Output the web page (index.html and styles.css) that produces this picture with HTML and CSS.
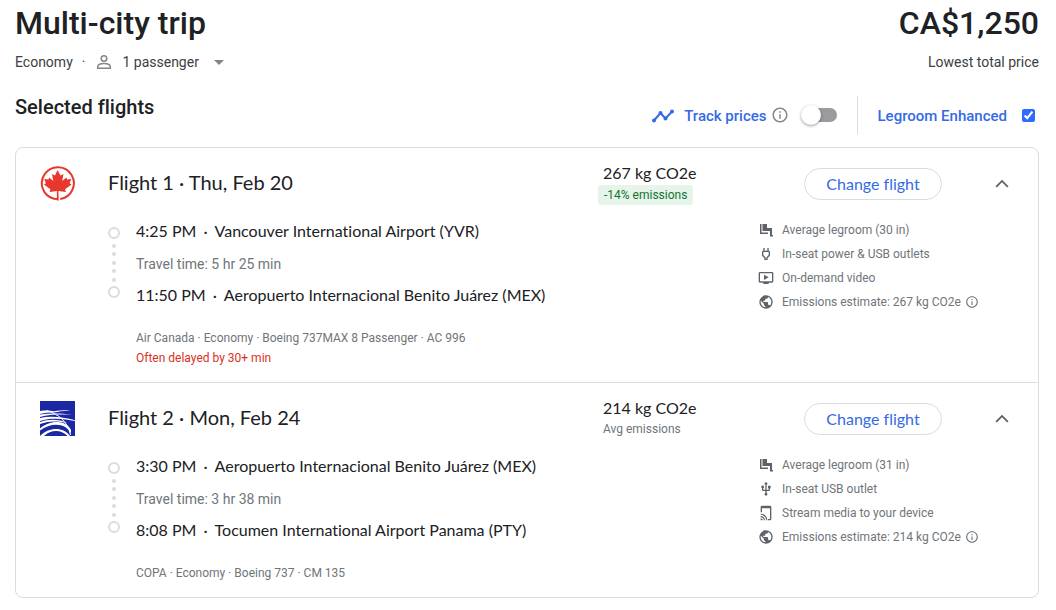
FILE: index.html
```html
<!DOCTYPE html>
<html lang="en">
<head>
<meta charset="utf-8">
<meta name="viewport" content="width=device-width, initial-scale=1">
<title>Multi-city trip</title>
<link rel="stylesheet" href="styles.css">
</head>
<body>
<svg class="sprite" aria-hidden="true">
  <symbol id="info" viewBox="0 0 24 24"><path d="M11 7h2v2h-2zm0 4h2v6h-2zm1-9C6.480 2 2 6.480 2 12s4.480 10 10 10 10-4.480 10-10S17.520 2 12 2zm0 18c-4.410 0-8-3.590-8-8s3.590-8 8-8 8 3.590 8 8-3.590 8-8 8z"/></symbol>
  <symbol id="chevron" viewBox="0 0 24 24"><path d="M12 8l-6 6 1.200 1.200L12 10.400l4.800 4.800L18 14z"/></symbol>
  <symbol id="seat" viewBox="0 0 16 16"><path d="M2 2h1.500v8.500H10V12H2zM4.500 2H9v4h5v7h1v1.500h-3V9H4.500z"/></symbol>
  <symbol id="power" viewBox="0 0 24 24"><path d="M16 9v4.660l-3.500 3.510V19h-1v-1.830L8 13.650V9h8m0-6h-2v4h-4V3H8v4h-.010C6.900 6.990 6 7.890 6 8.980v5.520L9.500 18v3h5v-3l3.500-3.510V9c0-1.100-.900-2-2-2V3z"/></symbol>
  <symbol id="video" viewBox="0 0 24 24"><path d="M9 7v8l7-4zm12-4H3c-1.110 0-2 .890-2 2v12c0 1.100.890 2 2 2h5v2h8v-2h5c1.100 0 1.990-.900 1.990-2L23 5c0-1.110-.900-2-2-2zm0 14H3V5h18v12z"/></symbol>
  <symbol id="globe" viewBox="0 0 24 24"><path d="M12 2C6.480 2 2 6.480 2 12s4.480 10 10 10 10-4.480 10-10S17.520 2 12 2zm-1 17.930c-3.950-.490-7-3.850-7-7.930 0-.620.080-1.210.210-1.790L9 15v1c0 1.100.900 2 2 2v1.930zm6.900-2.540c-.260-.810-1-1.390-1.900-1.390h-1v-3c0-.550-.450-1-1-1H8v-2h2c.550 0 1-.450 1-1V7h2c1.100 0 2-.900 2-2v-.410c2.930 1.190 5 4.060 5 7.410 0 2.080-.800 3.970-2.100 5.390z"/></symbol>
  <symbol id="usb" viewBox="0 0 24 24"><path d="M15 7v4h1v2h-3V5h2l-3-4-3 4h2v8H8v-2.070c.700-.370 1.200-1.080 1.200-1.930 0-1.210-.990-2.200-2.200-2.200S4.800 7.790 4.800 9c0 .850.500 1.560 1.200 1.930V13c0 1.110.890 2 2 2h3v3.050c-.710.370-1.200 1.100-1.200 1.950 0 1.220.990 2.200 2.200 2.200s2.200-.980 2.200-2.200c0-.850-.490-1.580-1.200-1.950V15h3c1.110 0 2-.890 2-2v-2h1V7z"/></symbol>
  <symbol id="stream" viewBox="0 0 24 24"><path d="M18 1H6c-1.100 0-2 .900-2 2v8h2V5h12v16h-3v2h3c1.100 0 2-.900 2-2V3c0-1.100-.900-2-2-2zM4 20v3h3c0-1.660-1.340-3-3-3zm0-3.500v1.700c2.650 0 4.800 2.150 4.800 4.800h1.700c0-3.590-2.910-6.500-6.500-6.500zM4 13v1.700c4.580 0 8.300 3.720 8.300 8.300H14c0-5.520-4.480-10-10-10z"/></symbol>
</svg>
<main class="page">
  <header class="summary">
    <div>
      <h1 class="display">Multi-city trip</h1>
      <div class="trip-info">
        <span>Economy</span><span class="sep">·</span>
        <button class="passengers" type="button">
          <svg class="icon-person" viewBox="0 0 16 16" aria-hidden="true"><circle cx="8" cy="4.500" r="2.800"/><path d="M1.700 14.300v-1.600c0-2 3.200-3.300 6.300-3.300s6.300 1.300 6.300 3.300v1.600z"/></svg>
          <span>1 passenger</span>
          <svg class="icon-caret" viewBox="0 0 10 5" aria-hidden="true"><path d="M0 0h10L5 5z"/></svg>
        </button>
      </div>
    </div>
    <div class="total">
      <p class="display">CA$1,250</p>
      <p class="total-note">Lowest total price</p>
    </div>
  </header>

  <div class="toolbar">
    <h2 class="subtitle">Selected flights</h2>
    <div class="track">
      <svg class="icon-trend" viewBox="0 0 24 16" aria-hidden="true"><path d="M3 13.500L9.500 6l5 5.500L21 4.500"/><circle cx="3" cy="13.500" r="2"/><circle cx="9.500" cy="6" r="2"/><circle cx="14.500" cy="11.500" r="2"/><circle cx="21" cy="4.500" r="2"/></svg>
      <label class="tool-label" for="track">Track prices</label>
      <svg class="icon-info-lg" aria-hidden="true"><use href="#info"/></svg>
      <input class="switch" id="track" type="checkbox" role="switch">
    </div>
    <div class="legroom">
      <label class="tool-label" for="legroom">Legroom Enhanced</label>
      <input class="check" id="legroom" type="checkbox" checked>
    </div>
  </div>

  <div class="card">
    <section class="flight">
      <div class="flight-head">
        <svg class="logo" viewBox="0 0 35 35" preserveAspectRatio="xMidYMin" role="img" aria-label="Air Canada">
          <path class="ac-ring" d="M20.200 33A16 16 0 1 0 14 32.700L17 33"/>
          <path class="ac-leaf" d="M17.500 4l3 5.400 3-1.500-1.300 7.200 4.100-3.700.800 2.200 4.200-.700-1.700 4.400 1.900 1.200-6.400 4.700.800 2.900-7.500-1.200.300 9.500h-1.900l.100-9.500-7.300 1.200.8-2.900-6.400-4.700 1.900-1.200-1.700-4.400 4.200.700.8-2.200 4.100 3.700-1.300-7.200 3 1.500z"/>
        </svg>
        <h3 class="flight-title">Flight 1 · Thu, Feb 20</h3>
        <div class="emissions"><span class="amount">267 kg CO2e</span><span class="badge">-14% emissions</span></div>
        <button class="change" type="button">Change flight</button>
        <button class="toggle" type="button" aria-label="Collapse flight 1"><svg class="icon-chevron" aria-hidden="true"><use href="#chevron"/></svg></button>
      </div>
      <div class="flight-body">
        <div class="timeline" aria-hidden="true"><i class="ring"></i><span class="dots"><i class="dot"></i><i class="dot"></i><i class="dot"></i><i class="dot"></i><i class="dot"></i></span><i class="ring"></i></div>
        <div class="route">
          <p class="stop"><span>4:25 PM</span><span>·</span><span>Vancouver International Airport (YVR)</span></p>
          <p class="duration">Travel time: 5 hr 25 min</p>
          <p class="stop"><span>11:50 PM</span><span>·</span><span>Aeropuerto Internacional Benito Juárez (MEX)</span></p>
          <p class="meta">Air Canada · Economy · Boeing 737MAX 8 Passenger · AC 996</p>
          <p class="delay">Often delayed by 30+ min</p>
        </div>
        <ul class="amenities">
          <li class="amenity"><svg class="icon" aria-hidden="true"><use href="#seat"/></svg>Average legroom (30 in)</li>
          <li class="amenity"><svg class="icon" aria-hidden="true"><use href="#power"/></svg>In-seat power &amp; USB outlets</li>
          <li class="amenity"><svg class="icon" aria-hidden="true"><use href="#video"/></svg>On-demand video</li>
          <li class="amenity"><svg class="icon" aria-hidden="true"><use href="#globe"/></svg>Emissions estimate: 267 kg CO2e<svg class="icon-info" aria-hidden="true"><use href="#info"/></svg></li>
        </ul>
      </div>
    </section>

    <section class="flight">
      <div class="flight-head">
        <svg class="logo" viewBox="0 0 35 35" preserveAspectRatio="xMidYMin" role="img" aria-label="Copa Airlines">
          <path class="copa-bg" d="M0 0h35v35H0z"/>
          <g class="copa-lines">
            <path d="M0 10c6-.8 9-.6 14 .2 6-.8 11-1 16-.8-7 .5-12 1-16 2.200-5 0-9 .4-14 1.400z"/>
            <path d="M0 13.500c11-1.500 22-1.200 32 .4-10-.4-22-.8-32 2z"/>
            <path d="M0 17c11-2.500 24-.6 35 2.300v.8C24 17.800 11 16.400 0 20z"/>
            <path d="M0 21c10-3.500 20-2.500 27 1-8-2-18-2.500-27 1z"/>
            <path d="M0 27.500c9-8.500 26-9.500 31 1.500v4C27 22.500 12 20.500 0 29.500z"/>
            <path d="M1 34c8-8 23-8.500 29 1h-2.500C21 28.300 11 28.500 4 35H0z"/>
          </g>
          <path class="copa-arc" d="M6 9.500C19 13 28 21 30.500 34"/>
        </svg>
        <h3 class="flight-title">Flight 2 · Mon, Feb 24</h3>
        <div class="emissions"><span class="amount">214 kg CO2e</span><span class="average">Avg emissions</span></div>
        <button class="change" type="button">Change flight</button>
        <button class="toggle" type="button" aria-label="Collapse flight 2"><svg class="icon-chevron" aria-hidden="true"><use href="#chevron"/></svg></button>
      </div>
      <div class="flight-body">
        <div class="timeline" aria-hidden="true"><i class="ring"></i><span class="dots"><i class="dot"></i><i class="dot"></i><i class="dot"></i><i class="dot"></i><i class="dot"></i></span><i class="ring"></i></div>
        <div class="route">
          <p class="stop"><span>3:30 PM</span><span>·</span><span>Aeropuerto Internacional Benito Juárez (MEX)</span></p>
          <p class="duration">Travel time: 3 hr 38 min</p>
          <p class="stop"><span>8:08 PM</span><span>·</span><span>Tocumen International Airport Panama (PTY)</span></p>
          <p class="meta">COPA · Economy · Boeing 737 · CM 135</p>
        </div>
        <ul class="amenities">
          <li class="amenity"><svg class="icon" aria-hidden="true"><use href="#seat"/></svg>Average legroom (31 in)</li>
          <li class="amenity"><svg class="icon" aria-hidden="true"><use href="#usb"/></svg>In-seat USB outlet</li>
          <li class="amenity"><svg class="icon" aria-hidden="true"><use href="#stream"/></svg>Stream media to your device</li>
          <li class="amenity"><svg class="icon" aria-hidden="true"><use href="#globe"/></svg>Emissions estimate: 214 kg CO2e<svg class="icon-info" aria-hidden="true"><use href="#info"/></svg></li>
        </ul>
      </div>
    </section>
  </div>
</main>
</body>
</html>
```
FILE: styles.css
```css
:root {
  --display: Lato, "Open Sans", sans-serif;
  --text: Roboto, "Liberation Sans", sans-serif;
  --ink: #202124;
  --muted: #70757a;
  --icon: #5f6368;
  --line: #dadce0;
  --blue: #356ae6;
}

* { box-sizing: border-box; }

body {
  margin: 0;
  background: #fff;
  color: var(--ink);
  font: 14px/20px var(--text);
  font-variant-ligatures: none;
}

h1, h2, h3, p, ul { margin: 0; padding: 0; }
ul { list-style: none; }
button { padding: 0; border: 0; background: none; color: inherit; font: inherit; cursor: pointer; }
svg { flex: none; }

.sprite { display: none; }
.page { padding: 3px 17px 12px 15px; }

.summary { display: flex; justify-content: space-between; }
.display { font-size: 32px; font-weight: 500; line-height: 40px; }
.trip-info { display: flex; align-items: center; margin-top: 9px; color: #3c4043; }
.sep { margin: 0 11px 0 9px; }
.passengers { display: flex; align-items: center; }
.icon-person { width: 16px; height: 16px; margin-right: 10px; fill: none; stroke: #80868b; stroke-width: 1.500; }
.icon-caret { width: 10px; height: 5px; margin-left: 15px; fill: #80868b; }
.total { text-align: right; }
.total-note { margin-top: 9px; color: #3c4043; }

.toolbar { display: flex; margin-top: 24px; height: 38px; align-items: center; }
.subtitle { flex: 1; align-self: flex-start; font-size: 20px; font-weight: 500; line-height: 22px; }
.track { display: flex; align-items: center; padding-right: 20px; }
.icon-trend { width: 24px; height: 16px; margin-right: 9px; fill: var(--blue); }
.icon-trend path { fill: none; stroke: var(--blue); stroke-width: 2; }
.tool-label { padding-top: 2px; color: var(--blue); font-size: 15px; font-weight: 500; line-height: 20px; }
.icon-info-lg { width: 18px; height: 18px; margin: 0 12px 0 4px; fill: #80868b; }
.switch { position: relative; width: 36px; height: 14px; margin: 0; border-left: 5px solid #fff; border-radius: 8px; background: #999b9e; background-clip: padding-box; appearance: none; cursor: pointer; }
.switch::before { content: ""; position: absolute; top: -3px; left: -5px; width: 20px; height: 20px; border-radius: 50%; background: #fff; box-shadow: 0 1px 3px rgb(0 0 0 / 40%); }
.switch:checked::before { left: 11px; }
.legroom { display: flex; align-items: center; height: 38px; padding: 0 4px 0 20px; border-left: 1px solid var(--line); gap: 15px; }
.check { width: 13px; height: 13px; margin: 0; accent-color: #2f6bff; }

.card { margin-top: 13px; border: 1px solid var(--line); border-radius: 8px; }
.flight { padding-bottom: 14px; }
.flight + .flight { border-top: 1px solid var(--line); }
.flight-head { display: flex; align-items: center; height: 70px; padding: 2px 16px 0 24px; }
.logo { width: 35px; height: 36px; margin-right: 33px; }
.ac-ring { fill: none; stroke: #e8372c; stroke-width: 2; }
.ac-leaf { fill: #e8372c; }
.copa-bg { fill: #1b27a3; }
.copa-lines { fill: #fff; }
.copa-arc { fill: none; stroke: #fff; stroke-width: 1; }
.flight-title { flex: 1; padding-bottom: 4px; font-family: var(--display); font-size: 20px; font-weight: 400; line-height: 28px; }
.emissions { display: flex; flex-direction: column; align-items: flex-start; width: 206px; height: 46px; }
.amount { margin-left: 5px; font-family: var(--display); font-size: 16px; line-height: 24px; }
.badge { padding: 0 6px; border-radius: 3px; background: #e6f4ea; color: #137333; font-size: 12px; line-height: 20px; }
.average { margin-left: 5px; color: var(--muted); font-size: 12px; line-height: 18px; }
.change { width: 138px; height: 32px; border: 1px solid var(--line); border-radius: 16px; color: var(--blue); font-family: var(--display); font-size: 16px; line-height: 20px; }
.toggle { display: flex; align-items: center; justify-content: center; width: 40px; height: 40px; margin-left: 40px; }
.icon-chevron { width: 26px; height: 26px; fill: var(--icon); }

.flight-body { display: flex; align-items: flex-start; padding-left: 92px; }
.timeline { display: flex; flex-direction: column; width: 12px; height: 71px; margin: 9px 16px 0 0; }
.ring { width: 12px; height: 12px; border: 2px solid var(--line); border-radius: 50%; }
.dots { display: flex; flex: 1; flex-direction: column; align-items: center; justify-content: space-evenly; }
.dot { width: 4px; height: 4px; border-radius: 50%; background: var(--line); }
.route { flex: 1; min-width: 0; padding-top: 1px; }
.stop { display: flex; gap: 7px; font-family: var(--display); font-size: 16px; line-height: 24px; }
.duration { margin: 11px 0 9px; color: var(--muted); }
.meta { margin-top: 21px; color: var(--muted); font-size: 12px; }
.delay { color: #d93025; font-size: 12px; }
.amenities { width: 280px; }
.amenity { display: flex; align-items: center; height: 24px; color: var(--muted); font-size: 12px; }
.icon { width: 16px; height: 16px; margin-right: 8px; fill: var(--icon); }
.icon-info { width: 14px; height: 14px; margin-left: 4px; fill: var(--muted); }
```
